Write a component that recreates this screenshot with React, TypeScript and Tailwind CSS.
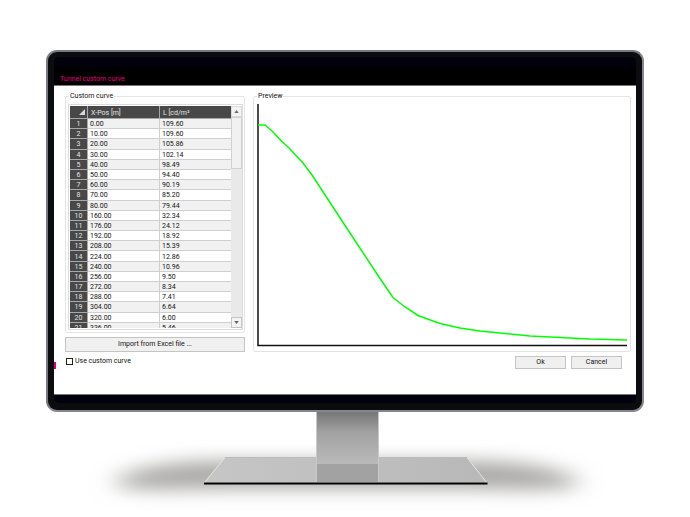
import { useState } from 'react'

const points = [
  ['0.00', '109.60'],
  ['10.00', '109.60'],
  ['20.00', '105.86'],
  ['30.00', '102.14'],
  ['40.00', '98.49'],
  ['50.00', '94.40'],
  ['60.00', '90.19'],
  ['70.00', '85.20'],
  ['80.00', '79.44'],
  ['160.00', '32.34'],
  ['176.00', '24.12'],
  ['192.00', '18.92'],
  ['208.00', '15.39'],
  ['224.00', '12.86'],
  ['240.00', '10.96'],
  ['256.00', '9.50'],
  ['272.00', '8.34'],
  ['288.00', '7.41'],
  ['304.00', '6.64'],
  ['320.00', '6.00'],
  ['336.00', '5.46'],
]

function PointsTable() {
  return (
    <div className="flex h-[226px] border border-[#dcdcdc] py-px pl-px">
      <div className="min-w-0 flex-1 overflow-hidden">
        <table className="h-[227px] w-full table-fixed border-separate border-spacing-0 text-left leading-[8px]">
          <thead>
            <tr className="h-[13px] bg-[#484848] text-[#e4e4e4]">
              <th className="w-[18px] border-r border-b border-[#a8a8a8] p-0">
                <svg viewBox="0 0 6 6" className="ml-auto mr-[2px] size-[6px]" aria-label="Select all">
                  <path d="M6 0v6H0z" fill="#d8d8d8" />
                </svg>
              </th>
              <th className="w-[72px] border-r border-b border-[#a8a8a8] pt-px pb-0 pl-[3px] font-normal">X-Pos [m]</th>
              <th className="border-b border-[#a8a8a8] pt-px pb-0 pl-[3px] font-normal">L [cd/m²</th>
            </tr>
          </thead>
          <tbody>
            {points.map(([x, l], i) => (
              <tr key={x} className="odd:bg-[#f1f1f1] even:bg-white">
                <th className="border-r border-b border-[#a8a8a8] bg-[#484848] px-0 pt-px pb-0 text-center font-normal text-[#e4e4e4]">
                  {i + 1}
                </th>
                <td className="border-r border-b border-[#cfcfcf] pt-px pb-0 pl-[2px]">{x}</td>
                <td className="border-b border-[#cfcfcf] pt-px pb-0 pl-[2px]">{l}</td>
              </tr>
            ))}
          </tbody>
        </table>
      </div>

      {/* Scrollbar */}
      <div className="flex w-[11px] flex-col bg-[#e9e9e9]">
        <button type="button" aria-label="Scroll up" className="flex h-[11px] items-center justify-center border border-[#dadada] bg-[#f3f3f3]">
          <svg viewBox="0 0 6 4" className="h-[3px] w-[5px]">
            <path d="M0 4 3 0l3 4z" fill="#707070" />
          </svg>
        </button>
        <div className="h-[52px] border border-[#d0d0d0] bg-[#f1f1f1]" />
        <button type="button" aria-label="Scroll down" className="mt-auto flex h-[11px] items-center justify-center border border-[#c4c4c4] bg-[#f3f3f3]">
          <svg viewBox="0 0 6 4" className="h-[3px] w-[5px]">
            <path d="M0 0l3 4 3-4z" fill="#606060" />
          </svg>
        </button>
      </div>
    </div>
  )
}

function Preview() {
  return (
    <svg viewBox="257 104 370 243" preserveAspectRatio="none" className="h-[243px] w-full" role="img" aria-label="Luminance curve">
      <path d="M258 104v241.500h369" fill="none" stroke="#111" strokeWidth="1.500" />
      <path
        d="M258 125H265L272 131 282 141.500 289 148 303 163 312 175 346 227 381 280 393 297.500 405 307 418 315.500 440 323.500 460 328 480 331 505 333.500 530 336 560 337.500 590 339 627 340"
        fill="none"
        stroke="#0f0"
        strokeWidth="1.500"
      />
    </svg>
  )
}

function Stand() {
  return (
    <svg viewBox="46 411 598 106" className="block w-full" aria-hidden="true">
      <defs>
        <filter id="soft" x="-30%" y="-100%" width="160%" height="300%">
          <feGaussianBlur stdDeviation="13 9" />
        </filter>
        <linearGradient id="neck" x1="0" y1="0" x2="0" y2="1">
          <stop offset="0" stopColor="#777" />
          <stop offset="0.4" stopColor="#a2a2a2" />
          <stop offset="1" stopColor="#bababa" />
        </linearGradient>
        <linearGradient id="foot" x1="0" y1="0" x2="1" y2="0">
          <stop offset="0" stopColor="#c6c6c6" />
          <stop offset="1" stopColor="#b8b8b8" />
        </linearGradient>
      </defs>
      <path
        d="M114 482C125 468 170 460 225 460H467C522 460 567 468 580 482C570 491 520 488 467 488H225C170 488 124 491 114 482z"
        fill="#a9a8a5"
        filter="url(#soft)"
      />
      <path d="M225 456.500h242l20 25.500H204z" fill="url(#foot)" stroke="#e6e6e6" />
      <path d="M225 456.500h242" stroke="#bcbcbc" />
      <path d="M317 411h61v52h-61z" fill="url(#neck)" />
      <path d="M317 463h61v18h-61z" fill="#a2a2a2" />
      <path d="M316.500 411v71M378.500 411v71" stroke="#c9c9c9" />
      <path d="M204 482.500h283.500" stroke="#000" strokeWidth="2" />
    </svg>
  )
}

export default function App() {
  const [useCustom, setUseCustom] = useState(false)

  return (
    <main className="bg-white px-[46px] pt-[50px] font-[Roboto,'Liberation_Sans',sans-serif] text-[7px] leading-[9px] text-[#111]">
      <div className="rounded-[11px] border-2 border-t-[#777b80] border-r-[#88858e] border-b-[#88858e] border-l-[#777b80] bg-[#0b0c0e] px-[6px] pt-[5px] pb-[7px]">
        <div className="overflow-hidden rounded-[5px] bg-[#02000d]">
          <header className="mt-[10px] bg-black px-[6px] pt-[8px] pb-px">
            <h1 className="text-[#e0007c]">Tunnel custom curve</h1>
          </header>

          <form
            className="relative border-t border-b border-[#777] bg-white pt-[6px] pr-[5px] pb-[25px] pl-[11px]"
            onSubmit={(e) => e.preventDefault()}
          >
            <span className="absolute bottom-[25px] left-0 h-[7px] w-[2px] bg-[#d6007c]" />
            <div className="flex gap-[8px]">
              <div className="flex w-[180px] flex-col gap-[4px]">
                <fieldset className="rounded-[2px] border border-[#e4e4e4] pt-[3px] pr-px pb-[2px] pl-[2px]">
                  <legend className="ml-px px-px">Custom curve</legend>
                  <PointsTable />
                </fieldset>
                <button type="button" className="h-[15px] border border-[#c4c4c4] bg-[#f0f0f0]">
                  Import from Excel file ...
                </button>
              </div>

              <fieldset className="min-w-0 flex-1 rounded-[2px] border border-[#e4e4e4] pt-[3px] pr-[3px] pl-[3px]">
                <legend className="px-px">Preview</legend>
                <Preview />
              </fieldset>
            </div>

            <div className="mt-[4px] flex items-start justify-between pr-[9px]">
              <label className="flex items-center gap-[2px] pt-px">
                <input
                  type="checkbox"
                  checked={useCustom}
                  onChange={(e) => setUseCustom(e.target.checked)}
                  className="ml-px size-[7px] appearance-none border border-[#222] bg-white checked:bg-[#222]"
                />
                Use custom curve
              </label>
              <div className="flex gap-[5px]">
                <button type="submit" className="h-[13px] w-[51px] border border-[#c4c4c4] bg-[#f0f0f0]">
                  Ok
                </button>
                <button type="button" className="h-[13px] w-[51px] border border-[#c4c4c4] bg-[#f0f0f0]">
                  Cancel
                </button>
              </div>
            </div>
          </form>
          <div className="h-[8px]" />
        </div>
      </div>
      <Stand />
    </main>
  )
}
